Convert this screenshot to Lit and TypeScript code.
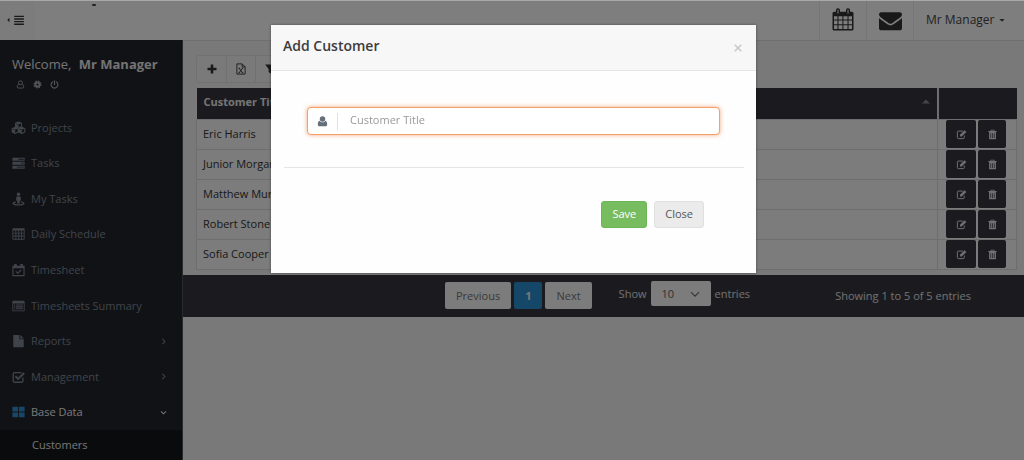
import { LitElement, html, css, svg, TemplateResult } from "lit";
import { customElement, property, state } from "lit/decorators.js";

const glyphs: Record<string, TemplateResult> = {
  menu: svg`<path d="M0 8l2.500-2.500v5z"/><path d="M8 3h11v1.600H8zM8 6h11v1.600H8zM8 9h11v1.600H8zM8 12h11v1.600H8z"/>`,
  cubes: svg`<g fill="none" stroke="currentColor" stroke-width="1.200" stroke-linejoin="round"><path d="M8 1.200l3.400 1.400v3.800L8 8 4.600 6.400V2.600zM4.200 7.200l3.400 1.500v3.900l-3.400 1.700L.8 12.600V8.700zM11.800 7.200l3.400 1.500v3.900l-3.400 1.700-3.400-1.700V8.700z"/></g><path d="M4.600 2.600L8 1.200l3.400 1.400L8 4zM.8 8.600l3.400-1.400 3.400 1.400-3.400 1.400zM8.400 8.600l3.400-1.400 3.400 1.400-3.400 1.400zM4.600 3L8 4.500V8L4.600 6.400zM.8 9l3.400 1.500v3.800L.8 12.600zM8.400 9l3.400 1.500v3.800l-3.400-1.700z"/>`,
  server: svg`<path fill-rule="evenodd" d="M1 2h14v3.500H1zM8 3.200v1h6v-1zM1 6.500h14V10H1zM11 7.700v1h3v-1zM1 11h14v3.500H1zM6 12.200v1h8v-1z"/>`,
  person: svg`<circle cx="8" cy="2.500" r="2"/><path d="M6 5h4l.6 1v4H9.500v3h-3v-3H5.400V6z"/><path fill="none" stroke="currentColor" stroke-width="1.500" d="M5 11.500c-5 .6-4 3.300 3 3.300s8-2.700 3-3.300"/>`,
  table: svg`<path fill-rule="evenodd" d="M2 1.500h12a1 1 0 0 1 1 1v11a1 1 0 0 1-1 1H2a1 1 0 0 1-1-1v-11a1 1 0 0 1 1-1zM2 4v2.500h2.500V4zM5.500 4v2.500h2.300V4zM8.800 4v2.500h2.200V4zM12 4v2.500h2V4zM2 7.500v2.300h2.500V7.500zM5.500 7.500v2.300h2.300V7.500zM8.800 7.500v2.300h2.200V7.500zM12 7.500v2.300h2V7.500zM2 10.800v2.500h2.500v-2.500zM5.500 10.800v2.500h2.300v-2.500zM8.800 10.800v2.500h2.200v-2.500zM12 10.800v2.500h2v-2.500z"/>`,
  check: svg`<path fill-rule="evenodd" d="M1 3h2V1h3v2h4V1h3v2h2v12H1zM2.300 6v7.700h11.400V6z"/><path fill="none" stroke="currentColor" stroke-width="1.400" d="M5 9.500l2.200 2.200L11 8"/>`,
  list: svg`<path fill-rule="evenodd" d="M2 2h12a1 1 0 0 1 1 1v10a1 1 0 0 1-1 1H2a1 1 0 0 1-1-1V3a1 1 0 0 1 1-1zM2 5v8h12V5z"/><path d="M3 6.200h1.200v1.200H3zM5 6.200h8v1.200H5zM3 8.400h1.200v1.200H3zM5 8.400h8v1.200H5zM3 10.600h1.200v1.200H3zM5 10.600h8v1.200H5z"/>`,
  file: svg`<path d="M2 1h7v5h5v9H2zM10 1l4 4h-4z"/>`,
  tick: svg`<path fill="none" stroke="currentColor" stroke-width="1.500" d="M13 8.500v4a1.500 1.500 0 0 1-1.500 1.500h-8A1.500 1.500 0 0 1 2 12.500v-8A1.500 1.500 0 0 1 3.500 3h8"/><path fill="none" stroke="currentColor" stroke-width="2.200" d="M4.500 7.200l3 3L14.500 3.500"/>`,
  windows: svg`<path d="M1 2h6.500v5.500H1zM8.500 2H15v5.500H8.500zM1 8.500h6.500V14H1zM8.500 8.500H15V14H8.500z"/>`,
  user: svg`<circle cx="8" cy="4.500" r="4"/><path d="M4 7C1.800 7.500 1.200 10 1.200 12.300c0 1.700.8 2.700 2.200 2.700h9.200c1.400 0 2.200-1 2.200-2.700C14.800 10 14.200 7.500 12 7c-1 1.500-2.200 2.200-4 2.200S5 8.500 4 7z"/>`,
  userLine: svg`<g fill="none" stroke="currentColor" stroke-width="1.500"><circle cx="8" cy="5" r="3.500"/><path d="M5 7.500c-2 .5-2.700 2.500-2.700 5 0 1.200.6 1.800 1.700 1.800h8c1.100 0 1.700-.6 1.700-1.800 0-2.500-.7-4.500-2.700-5"/></g>`,
  cog: svg`<circle cx="8" cy="8" r="3.700" fill="none" stroke="currentColor" stroke-width="3.400"/><circle cx="8" cy="8" r="6" fill="none" stroke="currentColor" stroke-width="2.200" stroke-dasharray="2.700 2.012"/>`,
  power: svg`<path fill="none" stroke="currentColor" stroke-width="2" stroke-linecap="round" d="M8 1.500V8M4.500 3.500a6 6 0 1 0 7 0"/>`,
  plus: svg`<path d="M6.300 2h3.400v4.300H14v3.400H9.700V14H6.300V9.700H2V6.300h4.300z"/>`,
  excel: svg`<path fill="none" stroke="currentColor" stroke-width="1.200" d="M2.500 1.200h7l4 4v9.600h-11zM9.500 1.200v4h4M5.500 7l4.500 6M10 7l-4.500 6M4.800 7h2M9 7h2M4.800 13h2M9 13h2"/>`,
  filter: svg`<path d="M1.500 2h13L9.800 8v6.500L6.200 12V8z"/>`,
  calendar: svg`<path fill-rule="evenodd" d="M2 2.500h12a1 1 0 0 1 1 1V14a1 1 0 0 1-1 1H2a1 1 0 0 1-1-1V3.500a1 1 0 0 1 1-1zM2 5.500v2.200h2.300V5.500zM5 5.500v2.200h2.600V5.500zM8.300 5.500v2.200H11V5.500zM11.700 5.500v2.200H14V5.500zM2 8.400v2.400h2.300V8.400zM5 8.400v2.400h2.600V8.400zM8.300 8.400v2.400H11V8.400zM11.700 8.400v2.400H14V8.400zM2 11.500V14h2.300v-2.500zM5 11.500V14h2.600v-2.500zM8.300 11.500V14H11v-2.500zM11.700 11.500V14H14v-2.500z"/><g fill="#aaa" stroke-width=".8" stroke="currentColor"><rect x="3.700" y=".6" width="1.900" height="3.600" rx=".9"/><rect x="10.400" y=".6" width="1.900" height="3.600" rx=".9"/></g>`,
  edit: svg`<path fill="none" stroke="currentColor" stroke-width="1.400" d="M12 9.500v3a1.500 1.500 0 0 1-1.500 1.500h-7A1.500 1.500 0 0 1 2 12.500v-8A1.500 1.500 0 0 1 3.500 3H10"/><path d="M5.800 11V8.500L12.500 1.800 15 4.300 8.300 11z"/>`,
  trash: svg`<path fill-rule="evenodd" d="M5.500 1h5l.8 2H14v1.500h-1V14a1 1 0 0 1-1 1H4a1 1 0 0 1-1-1V4.500H2V3h2.700zM6.300 2l-.4 1h4.200l-.4-1zM5 6v7h1V6zM7.500 6v7h1V6zM10 6v7h1V6z"/>`,
  right: svg`<path fill="none" stroke="currentColor" stroke-width="1.800" d="M6 3.500L10.500 8 6 12.500"/>`,
  down: svg`<path fill="none" stroke="currentColor" stroke-width="1.800" d="M3.500 6L8 10.500 12.500 6"/>`,
  chevron: svg`<path fill="none" stroke="currentColor" stroke-width="1.800" d="M1.500 5L8 11.500 14.500 5"/>`,
  caret: svg`<path d="M1 5h14L8 12.500z"/>`,
  sort: svg`<path d="M0 11h16L8 3z"/>`,
  close: svg`<path fill="none" stroke="currentColor" stroke-width="2.800" d="M1.500 1.500l13 13M14.500 1.500l-13 13"/>`,
};

@customElement("ui-icon")
class UiIcon extends LitElement {
  @property() name = "";
  static styles = css`
    :host { display: inline-flex; flex: none; width: 14px; height: 14px; }
    .glyph { width: 100%; height: 100%; fill: currentColor; overflow: visible; }
  `;
  render() {
    const box = this.name === "menu" ? "0 0 20 16" : "0 0 16 16";
    return html`<svg class="glyph" viewBox=${box} aria-hidden="true">${glyphs[this.name]}</svg>`;
  }
}

@customElement("mail-icon")
class MailIcon extends LitElement {
  static styles = css`
    :host { display: inline-flex; width: 23px; height: 23px; }
    .glyph { width: 100%; height: 100%; fill: currentColor; }
  `;
  render() {
    return html`<svg class="glyph" viewBox="0 0 1792 1792" aria-hidden="true">
      <path d="M1792 710v794q0 66-47 113t-113 47H160q-66 0-113-47T0 1504V710q44 49 101 87 362 246 497 345 57 42 92.500 65.500t94.500 48 110 24.500h2q51 0 110-24.500t94.500-48T1194 1142q170-123 498-345 57-39 100-87zm0-294q0 79-49 151t-122 123q-376 261-468 325-10 7-42.500 31T1057 1084t-52 32.500-57.500 27T897 1152h-2q-23 0-50-9t-57.500-27T735 1084t-53.500-38-42.500-31q-91-64-262-182.500T172 690q-62-42-117-115.500T0 438q0-78 41.500-130T160 256h1472q65 0 112.500 47t47.500 113z"/>
    </svg>`;
  }
}

const reset = css`
  *, *::before, *::after { box-sizing: border-box; }
  button, input, select { font: inherit; color: inherit; margin: 0; padding: 0; border: 0; background: none; }
  a { color: inherit; text-decoration: none; }
  ul { list-style: none; margin: 0; padding: 0; }
`;

@customElement("top-bar")
class TopBar extends LitElement {
  static styles = [reset, css`
    :host { display: block; font-size: 12px; }
    .bar { display: flex; align-items: stretch; height: 41px; background: #fdfdfd; border-bottom: 1px solid #dedede; color: #333; }
    .toggle { display: flex; align-items: center; padding-left: 7px; width: 35px; background: #f9f9f9; }
    .toggle ui-icon { width: 18px; height: 14px; }
    .brand { flex: 1; padding: 4px 0 0 57px; }
    .mark { display: block; width: 4px; height: 2px; border-radius: 1px; background: #444; }
    .cell { display: flex; align-items: center; justify-content: center; width: 47px; border-left: 1px solid #ededed; }
    .cell ui-icon { width: 24px; height: 24px; }
    .account { display: flex; align-items: center; gap: 5px; width: 111px; padding-left: 12px; border-left: 1px solid #ededed; color: #444; }
    .account ui-icon { width: 6px; height: 6px; }
  `];
  render() {
    return html`<header class="bar">
      <button class="toggle" aria-label="Toggle menu"><ui-icon name="menu"></ui-icon></button>
      <div class="brand"><span class="mark"></span></div>
      <button class="cell" aria-label="Calendar"><ui-icon name="calendar"></ui-icon></button>
      <button class="cell" aria-label="Messages"><mail-icon></mail-icon></button>
      <button class="account">Mr Manager <ui-icon name="caret"></ui-icon></button>
    </header>`;
  }
}

@customElement("side-nav")
class SideNav extends LitElement {
  static styles = [reset, css`
    :host { display: block; background: #22252c; color: #7f8894; border-right: 1px solid #555; }
    .welcome { padding: 14px 12px 0; font-size: 13px; line-height: 20px; color: #e6e6e6; }
    .name { margin-left: 4px; }
    .tools { display: flex; gap: 7px; height: 36px; padding: 6px 16px; color: #a4abb5; }
    .tools ui-icon { width: 9px; height: 9px; }
    .tool { display: flex; width: 10px; height: 10px; }
    .menu { display: grid; grid-auto-rows: 1fr; min-height: 320px; }
    .item { display: flex; align-items: center; gap: 5px; height: 100%; padding: 0 14px 0 11px; }
    .item.active { color: #f0f0f0; }
    .item.active .lead { color: #2f8fd0; }
    .label { flex: 1; }
    .lead { width: 15px; height: 14px; }
    .arrow { width: 9px; height: 9px; }
    .sub { display: flex; align-items: center; height: 30px; padding-left: 32px; background: #15161a; color: #e8e8e8; }
  `];
  items = [
    ["cubes", "Projects", ""], ["server", "Tasks", ""], ["person", "My Tasks", ""],
    ["table", "Daily Schedule", ""], ["check", "Timesheet", ""], ["list", "Timesheets Summary", ""],
    ["file", "Reports", "right"], ["tick", "Management", "right"], ["windows", "Base Data", "down"],
  ];
  render() {
    return html`
      <div class="welcome">Welcome, <b class="name">Mr Manager</b></div>
      <div class="tools">
        <button class="tool" aria-label="Profile"><ui-icon name="userLine"></ui-icon></button>
        <button class="tool" aria-label="Settings"><ui-icon name="cog"></ui-icon></button>
        <button class="tool" aria-label="Log out"><ui-icon name="power"></ui-icon></button>
      </div>
      <nav>
        <ul class="menu">
          ${this.items.map(([icon, text, arrow]) => html`<li>
            <a href="#" class="item ${arrow === "down" ? "active" : ""}">
              <ui-icon class="lead" name=${icon}></ui-icon><span class="label">${text}</span>
              ${arrow ? html`<ui-icon class="arrow" name=${arrow}></ui-icon>` : ""}
            </a></li>`)}
        </ul>
        <a href="#" class="sub">Customers</a>
      </nav>`;
  }
}

@customElement("customer-list")
class CustomerList extends LitElement {
  @state() rows = ["Eric Harris", "Junior Morgan", "Matthew Murphy", "Robert Stone", "Sofia Cooper"];
  static styles = [reset, css`
    :host { display: block; min-width: 0; color: #333; }
    .toolbar { display: inline-flex; margin: 14px 0 5px 13px; border: 1px solid #e2e2e2; border-radius: 3px; background: #f5f5f5; vertical-align: top; }
    .tool { display: flex; align-items: center; justify-content: center; width: 29px; height: 26px; }
    .tool + .tool { border-left: 1px solid #e2e2e2; }
    .tool ui-icon { width: 12px; height: 12px; }
    .holder { padding: 0 7px 5px 13px; }
    .grid { width: 100%; border-collapse: collapse; table-layout: fixed; background: #f8f8f8; }
    .grid th { height: 31px; padding: 0 7px 2px; background: #36373f; color: #eaeaea; text-align: left; border-right: 2px solid #ddd; }
    .grid th:last-child { border-right: 0; }
    .grid td { height: 30px; padding: 0 6px; border: 1px solid #dcdcdc; }
    .grid td:last-child { padding-left: 8px; }
    .head { display: flex; align-items: center; justify-content: space-between; }
    .head ui-icon { width: 8px; height: 8px; color: #8b8b90; }
    .last { width: 79px; }
    .actions { display: flex; gap: 2px; }
    .act { display: flex; align-items: center; justify-content: center; width: 30px; height: 28px; border-radius: 2px; background: #36373f; color: #e4dfe4; }
    .act + .act { width: 28px; }
    .act ui-icon { width: 11px; height: 11px; }
    .footer { display: flex; align-items: center; min-height: 42px; padding: 0 53px 0 262px; background: #36373f; color: #e0e0e0; }
    .pages { display: flex; gap: 3px; }
    .page { height: 27px; padding: 0 11px; border-radius: 2px; background: #f8f8f8; color: #777; }
    .page.current { background: #2b8ed0; color: #f0f0f0; font-weight: 700; }
    .size { display: flex; align-items: center; gap: 4px; margin: 0 auto 4px 27px; }
    .select { display: grid; align-items: center; width: 60px; height: 25px; background: #f8f8f8; border-radius: 2px; color: #666; }
    .select select { grid-area: 1 / 1; appearance: none; height: 25px; padding-left: 11px; }
    .select ui-icon { grid-area: 1 / 1; justify-self: end; margin-right: 11px; width: 10px; height: 10px; pointer-events: none; }
  `];
  render() {
    return html`
      <div class="toolbar">
        <button class="tool" aria-label="Add"><ui-icon name="plus"></ui-icon></button>
        <button class="tool" aria-label="Export"><ui-icon name="excel"></ui-icon></button>
        <button class="tool" aria-label="Filter"><ui-icon name="filter"></ui-icon></button>
      </div>
      <div class="holder">
        <table class="grid">
          <thead><tr>
            <th><div class="head">Customer Title <ui-icon name="sort"></ui-icon></div></th>
            <th class="last"></th>
          </tr></thead>
          <tbody>
            ${this.rows.map((r) => html`<tr><td>${r}</td><td><div class="actions">
              <button class="act" aria-label="Edit ${r}"><ui-icon name="edit"></ui-icon></button>
              <button class="act" aria-label="Delete ${r}"><ui-icon name="trash"></ui-icon></button>
            </div></td></tr>`)}
          </tbody>
        </table>
      </div>
      <div class="footer">
        <div class="pages">
          <button class="page">Previous</button><button class="page current">1</button><button class="page">Next</button>
        </div>
        <div class="size">
          <label for="size">Show</label>
          <span class="select"><select id="size"><option>10</option><option>25</option></select><ui-icon name="chevron"></ui-icon></span>
          <span>entries</span>
        </div>
        <span>Showing 1 to 5 of 5 entries</span>
      </div>`;
  }
}

@customElement("customer-dialog")
class CustomerDialog extends LitElement {
  static styles = [reset, css`
    :host { display: block; }
    .backdrop { position: fixed; inset: 0; display: flex; justify-content: center; align-items: flex-start; padding: 24px 0 0 3px; border-top: 1px solid #a8a8a8; background: rgba(0, 0, 0, 0.5); }
    .dialog { width: 485px; max-width: 100%; background: #fefefe; box-shadow: 0 0 3px rgba(0, 0, 0, 0.4); color: #444; }
    .head { display: flex; align-items: center; justify-content: space-between; height: 46px; padding: 0 13px 3px 12px; background: #f7f7f7; border-bottom: 1px solid #e5e5e5; }
    .title { margin: 0; font-size: 14px; line-height: 20px; font-weight: 600; color: #3c3c3c; }
    .close { display: flex; padding: 4px 1px 0 0; color: #c4c4c4; }
    .close ui-icon { width: 8px; height: 8px; }
    .body { margin: 0 12px 0 13px; padding: 36px 24px 32px 23px; border-bottom: 1px solid #e5e5e5; }
    .field { display: flex; align-items: center; height: 28px; padding-left: 9px; border: 1px solid #f3a06c; border-radius: 4px; box-shadow: 0 0 4px rgba(243, 140, 80, 0.75); background: #fff; }
    .field label { display: flex; align-items: center; width: 21px; height: 17px; border-right: 1px solid #e2e2e2; color: #66707a; }
    .field ui-icon { width: 11px; height: 11px; }
    .field input { flex: 1; min-width: 0; height: 26px; padding: 0 12px 3px; outline: none; }
    .field input::placeholder { color: #999; opacity: 1; }
    .foot { display: flex; justify-content: flex-end; gap: 7px; padding: 33px 52px 45px; }
    .btn { height: 27px; padding: 0 10px 2px; border-radius: 3px; background: #ebebeb; border: 1px solid #e0e0e0; color: #555; }
    .btn.save { background: #77bc5f; border-color: #6fb457; color: #fff; }
  `];
  render() {
    return html`<div class="backdrop">
      <section class="dialog" role="dialog" aria-labelledby="title">
        <header class="head">
          <h2 class="title" id="title">Add Customer</h2>
          <button class="close" aria-label="Dismiss"><ui-icon name="close"></ui-icon></button>
        </header>
        <div class="body">
          <div class="field">
            <label for="customer" aria-label="Customer Title"><ui-icon name="user"></ui-icon></label>
            <input id="customer" type="text" placeholder="Customer Title" />
          </div>
        </div>
        <footer class="foot"><button class="btn save">Save</button><button class="btn">Close</button></footer>
      </section>
    </div>`;
  }
}

@customElement("app-root")
class AppRoot extends LitElement {
  static styles = css`
    :host { display: flex; flex-direction: column; min-height: 100vh; background: #f2f2f2; font: 11px/16px "Open Sans", sans-serif; }
    .main { flex: 1; display: grid; grid-template-columns: 183px 1fr; }
    side-nav { margin-top: -1px; }
  `;
  render() {
    return html`<top-bar></top-bar>
      <div class="main"><side-nav></side-nav><customer-list></customer-list></div>
      <customer-dialog></customer-dialog>`;
  }
}
